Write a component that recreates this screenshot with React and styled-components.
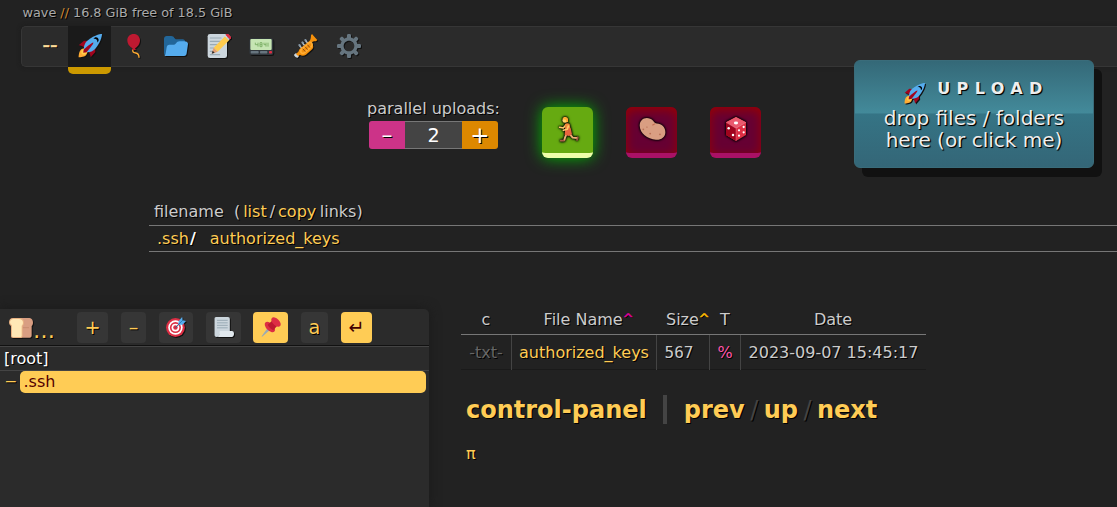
import React from 'react';
import styled, { createGlobalStyle, css } from 'styled-components';

const Global = createGlobalStyle`
  * { box-sizing: border-box; }
  body {
    margin: 0;
    background: #222;
    color: #ccc;
    font: 16px/1.2 "DejaVu Sans", sans-serif;
    text-shadow: 1px 1px 0 #000;
    overflow: hidden;
  }
`;

const Page = styled.div`
  position: relative;
  width: 1117px;
  height: 507px;
  overflow: hidden;
  display: flex;
  flex-direction: column;
`;

const Info = styled.div`
  flex: none;
  height: 26px;
  line-height: 26px;
  padding-left: 22.5px;
  font-size: 12.8px;
  color: #aaa;
  span { color: #c83; }
`;

const Toolbar = styled.nav`
  flex: none;
  display: flex;
  height: 41px;
  margin-left: 21px;
  background: #2b2b2b;
  border: 1px solid #363636;
  border-right: 0;
  border-radius: 5px 0 0 5px;
  box-shadow: 0 0 4px #1c1c1c;
`;

const Tab = styled.a`
  flex: none;
  display: flex;
  align-items: center;
  justify-content: center;
  width: ${p => p.$w || 43.2}px;
  height: 39px;
  padding-bottom: 1px;
  color: #fc5;
  ${p => p.$dashes && css`
    padding-left: 10px;
    font-size: 21px;
    color: #fd9;
    -webkit-text-stroke: 0.4px #fd9;
  `}
  ${p => p.$on && css`
    height: 48px;
    margin-top: -1px;
    background: #1a1a1a;
    border-bottom: 7px solid #c90;
    border-radius: 0 0 5px 5px;
  `}
`;

const Emoji = styled.svg`
  display: block;
  flex: none;
  width: ${p => p.$s || 24}px;
  height: ${p => p.$s || 24}px;
  overflow: visible;
  filter: ${p => p.$glow
    ? 'drop-shadow(0 0 1px #000) drop-shadow(0 0 1px #000)'
    : p.$flat ? 'none' : 'drop-shadow(1px 1px 0 #111)'};
`;

const Config = styled.section`
  flex: none;
  display: flex;
  height: 132px;
  padding: 31px 0 0 365px;
`;

const Parallel = styled.div`
  width: 137px;
  margin-right: 40px;
  text-align: center;
  line-height: 21px;
  white-space: nowrap;
`;

const Stepper = styled.div`
  display: flex;
  width: 129px;
  height: 28px;
  margin: 2px 0 0 4px;
  font-size: 19.2px;
  line-height: 28px;
  color: #fff;
`;

const StepButton = styled.span`
  width: 36px;
  font-size: ${p => p.$fs || 20}px;
  background: ${p => p.$bg};
  border-radius: ${p => p.$r};
`;

const StepValue = styled.span`
  flex: 1;
  line-height: 27px;
  background: #444;
  border: solid #777;
  border-width: 1px 0;
  text-shadow: none;
`;

const Toggle = styled.div`
  width: 51px;
  height: 51px;
  margin: 9px 33px 0 0;
  padding-top: 10px;
  display: flex;
  justify-content: center;
  align-items: flex-start;
  border-radius: 6px;
  background: ${p => (p.$on ? '#6a1' : '#603')};
  border-bottom: 5px solid ${p => (p.$on ? '#efa' : '#a16')};
  box-shadow: ${p => (p.$on ? '0 0 16px #0b0' : 'inset 0 3px 11px #900')};
`;

const Upload = styled.div`
  position: absolute;
  left: 854px;
  top: 60px;
  width: 240px;
  height: 108px;
  padding-top: 17px;
  border-radius: 6px;
  border: 1px solid #3a6c7a;
  background: linear-gradient(#346877 0%, #438a9a 49%, #357485 50%, #346677 100%);
  background-origin: border-box;
  box-shadow: 8px 9px 0 #111;
  color: #eee;
  text-align: center;
  font-size: 20px;
  line-height: 22px;
  text-shadow: 1px 1px 1px #000, 1px 1px 0 #122;
`;

const UploadTitle = styled.div`
  display: flex;
  justify-content: center;
  gap: 12px;
  height: 29px;
  line-height: 22px;
  font-size: 16px;
  font-weight: bold;
  letter-spacing: 6.4px;
  padding-left: 5px;
  svg { margin-top: 5px; }
`;

const Files = styled.section`
  flex: none;
  margin: 0 0 57px 149px;
`;

const FileLine = styled.div`
  height: ${p => (p.$head ? 27 : 26)}px;
  line-height: 25px;
  padding-left: ${p => (p.$head ? 5 : 8)}px;
  border-bottom: 1px solid #777;
  white-space: pre;
  a { color: #fc5; }
  b { color: #fff; margin-left: 1px; }
`;

const Gap = styled.span`
  display: inline-block;
  width: ${p => p.$w}px;
`;

const Bottom = styled.div`
  flex: 1;
  display: flex;
`;

const Tree = styled.aside`
  width: 429px;
  background: #2b2b2b;
  border-radius: 0 5px 0 0;
  box-shadow: 0 0 12px #1a1a1a;
`;

const TreeHead = styled.div`
  display: flex;
  height: 37px;
  padding-top: 3px;
  border-bottom: 1px solid #111;
`;

const Crumb = styled.div`
  display: flex;
  width: 77px;
  padding: 4px 0 0 9px;
  color: #fc5;
  font-size: 22px;
  line-height: 29px;
`;

const TreeButton = styled.a`
  display: flex;
  align-items: center;
  justify-content: center;
  width: ${p => p.$w}px;
  height: 31px;
  margin-right: ${p => p.$mr || 0}px;
  padding-bottom: 1px;
  border-radius: 4px;
  font-size: 19.2px;
  line-height: 31px;
  color: ${p => (p.$on ? '#400' : '#fc5')};
  background: ${p => (p.$on ? '#fc5' : '#363636')};
  ${p => p.$on && css`text-shadow: none;`}
`;

const Root = styled.div`
  height: 25px;
  line-height: 23px;
  padding-left: 4px;
  color: #fff;
  border-top: 1px solid #444;
  border-bottom: 1px solid #444;
`;

const Branch = styled.div`
  display: flex;
  line-height: 21px;
  color: #fc5;
`;

const Collapse = styled.span`
  width: 20px;
  padding-left: 6px;
  line-height: 19px;
  font-family: "DejaVu Sans Mono", monospace;
`;

const Leaf = styled.a`
  width: 406px;
  height: 22px;
  padding-left: 3.5px;
  border-radius: 5px;
  background: #fc5;
  color: #500;
  text-shadow: none;
`;

const Main = styled.main`
  padding-left: 32px;
`;

const columns = '50px 145px 53px 31px 186px';

const HeadRow = styled.div`
  display: grid;
  grid-template-columns: ${columns};
  height: 26px;
  line-height: 21px;
  border-bottom: 1px solid #777;
  text-align: center;
  white-space: nowrap;
`;

const DataRow = styled(HeadRow)`
  height: 35px;
  line-height: 35px;
  border-bottom: 1px solid #1a1a1a;
`;

const Cell = styled.span`
  color: ${p => p.$c || '#ccc'};
  padding-left: ${p => p.$pl || 0}px;
  ${p => p.$line && css`border-left: 1px solid #444;`}
  ${p => p.$mono && css`font-family: "DejaVu Sans Mono", monospace; padding-right: 8px;`}
`;

const Sort = styled.sup`
  color: ${p => p.$c};
  font-size: 12.8px;
  line-height: 0;
  vertical-align: 2px;
  -webkit-text-stroke: 0.5px ${p => p.$c};
`;

const Nav = styled.div`
  display: flex;
  align-items: center;
  height: 30px;
  margin: 25px 0 0 5px;
  font-size: 24px;
  font-weight: bold;
  color: #fc5;
`;

const Divider = styled.i`
  width: 4px;
  height: 29px;
  margin: -1px 17px 0 16px;
  background: #444;
`;

const Slash = styled.span`
  width: 19px;
  text-align: center;
  color: #444;
  font-weight: normal;
`;

const Pi = styled.div`
  margin: 19px 0 0 5px;
  color: #fc5;
`;

const art = {
  rocket: <>
    <path fill="#A0041E" d="M1 17l8-7 16 1 1 16-7 8s.001-5.999-6-12-12-6-12-6z" />
    <path fill="#FFAC33" d="M.973 35s-.036-7.979 2.985-11S15 21.187 15 21.187 14.999 29 11.999 32c-3 3-11.026 3-11.026 3z" />
    <circle fill="#FFCC4D" cx="9" cy="27" r="4" />
    <path fill="#55ACEE" d="M35.999 0s-10 0-22 10c-6 5-6 14-4 16s11 2 16-4c10-12 10-22 10-22z" />
    <path d="M26.999 5c-1.623 0-3.013.971-3.641 2.36.502-.227 1.055-.36 1.641-.36 2.209 0 4 1.791 4 4 0 .586-.133 1.139-.359 1.64 1.389-.627 2.359-2.017 2.359-3.64 0-2.209-1.791-4-4-4z" />
    <path fill="#A0041E" d="M8 28s0-4 1-5 13.001-10.999 14-10-9.001 13-10.001 14S8 28 8 28z" />
  </>,
  balloon: <>
    <path fill="none" stroke="#FFAC33" strokeWidth="2" strokeLinecap="round" d="M18 23c-1.500 4 1 5 4 5.500s5 3 5 6.500" />
    <path fill="#BE1931" d="M28.500 9.500c0 5.500-3.500 10-7.500 12l1.500 2.500h-6l1-2.500c-4.500-2-8-6.500-8-12C9.500 4 13.500 0 19 0s9.500 4 9.500 9.500z" />
  </>,
  folder: <>
    <path fill="#269" d="M0 29c0 2.200 1.800 4 4 4h24c2.200 0 4-1.800 4-4V12c0-2.200-1.800-4-4-4h-9c-3.600 0-3-5-8.400-5H4C1.800 3 0 4.800 0 7v22z" />
    <path fill="#55ACEE" d="M30 11h-6.600C18 11 18.600 16 15 16H8c-2.200 0-4 1.800-4 4L2.500 29c-.3 2-.8 3-1.700 3.500C1.500 33 3 33 4 33h26c2.200 0 4-1.800 4-4l2-14c0-2.200-1.800-4-6-4z" />
  </>,
  memo: <>
    <rect fill="#CCD6DD" x="1" y="0" width="29" height="36" rx="3.500" />
    <path stroke="#99AAB5" strokeWidth="1.800" strokeLinecap="round" d="M5 6h16M5 11h16M5 16h13M5 21h9M5 26h8M5 31h14" />
    <path fill="#FFCC4D" d="M10 20.500L27.500 3l6 6L16 26.500z" />
    <path fill="#F4ABBA" d="M29 1.500l2-1.500 5 5-2 2.500z" />
    <path fill="#DD2E44" d="M29 0h3l4 4v3l-2 1-6-6z" />
    <path fill="#CCD6DD" d="M26.500 3.500l1.500-1.500 6 6-1.500 1.500z" />
    <path fill="#E39F71" d="M10 20.500l6 6-8 3-1-1z" />
    <path fill="#292F33" d="M8.500 25l3 3-4.500 1.800z" />
  </>,
  pager: <>
    <rect fill="#31373D" x="-1" y="6.500" width="36" height="25" rx="3.500" />
    <rect fill="#C6E5B3" x=".5" y="7.500" width="32" height="16.500" rx="1.500" />
    <path fill="none" stroke="#7DAF66" strokeWidth="1.400" d="M8 13v3h4m0-3v6m3-6h3v6h-3zm0 3h3m3-3v3h3m0-3v6m3-6v6" />
    <rect fill="#67757F" x="1" y="25.500" width="12" height="3.800" rx="1" />
    <rect fill="#67757F" x="15" y="25.500" width="11" height="3.800" rx="1" />
    <rect fill="#DD2E44" x="28.500" y="25.500" width="4.500" height="3.800" rx="1" />
  </>,
  trumpet: <>
    <path fill="#CCD6DD" d="M0 31l3-2.500 4.500 4.500-2 2.500c-2 .5-5.500-2.500-5.500-4.500z" />
    <path stroke="#BCC6CD" strokeWidth="2.200" d="M8 17l5 6M12.500 13l5 6M17 9.500l5 6" />
    <path stroke="#8899A6" strokeWidth="3" strokeLinecap="round" d="M8 16.500l1 1M12.500 12.500l1 1M17 9l1 1" />
    <path fill="#F4900C" d="M3 30L23 11c2-2 2.500-6 2.500-9L27 0l8 9-2 2c-4 0-5 .5-7 2.500L6.500 33.500z" />
    <path fill="#F4900C" d="M9 22l14-11 5 5c2 4 0 6-2 8l-8 7c-3 2-7 2-9 0s-3-6 0-9z" />
    <path fill="none" stroke="#FFAC33" strokeWidth="2.600" d="M11 23c-3 3 1 8 5 5l10-9c3-3 0-8-3-6z" />
    <path fill="none" stroke="#7c3f10" strokeWidth="1.300" strokeLinecap="round" d="M13.500 22.500l3 3.500M17 19.500l3 3.500M20.500 16.500l3 3.500" />
  </>,
  gear: <path fill="#66757F" d="M34 15h-3.362c-.324-1.369-.864-2.651-1.582-3.814l2.379-2.379c.781-.781.781-2.048 0-2.829l-1.414-1.414c-.781-.781-2.047-.781-2.828 0l-2.379 2.379C23.65 6.225 22.369 5.686 21 5.362V2c0-1.104-.896-2-2-2h-2c-1.104 0-2 .896-2 2v3.362c-1.369.324-2.651.864-3.814 1.582L8.808 4.565c-.781-.781-2.048-.781-2.828 0L4.565 5.979c-.781.781-.781 2.048-.001 2.829l2.379 2.379C6.225 12.35 5.686 13.632 5.362 15H2c-1.104 0-2 .896-2 2v2c0 1.104.896 2 2 2h3.362c.324 1.368.864 2.65 1.582 3.813l-2.379 2.379c-.78.78-.78 2.048.001 2.829l1.414 1.414c.78.78 2.047.78 2.828 0l2.379-2.379c1.163.719 2.445 1.258 3.814 1.582V34c0 1.104.896 2 2 2h2c1.104 0 2-.896 2-2v-3.362c1.368-.324 2.65-.864 3.813-1.582l2.379 2.379c.781.781 2.047.781 2.828 0l1.414-1.414c.781-.781.781-2.048 0-2.829l-2.379-2.379c.719-1.163 1.258-2.445 1.582-3.814H34c1.104 0 2-.896 2-2v-2C36 15.896 35.104 15 34 15zM18 26c-4.418 0-8-3.582-8-8s3.582-8 8-8 8 3.582 8 8-3.582 8-8 8z" />,
  runner: <>
    <path fill="none" stroke="#FFCB6B" strokeWidth="2.400" strokeLinecap="round" strokeLinejoin="round" d="M14.500 12.500l-3.500 4-5.500-1" />
    <path fill="none" stroke="#EFB074" strokeWidth="2.800" strokeLinecap="round" strokeLinejoin="round" d="M15.500 26l-2 5-1 3.500M21 26l4 5 7 .5" />
    <path fill="none" stroke="#A85C46" strokeWidth="2.400" strokeLinecap="round" d="M12 35.500H7M32.500 30.500l-1 4" />
    <path fill="#F28A3C" d="M13.500 10.500c2-1.500 5.500-1.500 7 .5l1.500 9h-8z" />
    <path fill="#E8653F" d="M14 17h8l2 9-4.500 2.500-6.500-1.500z" />
    <path fill="none" stroke="#FFCB6B" strokeWidth="2.400" strokeLinecap="round" strokeLinejoin="round" d="M18.500 13.500l-1.500 5-6 1.500" />
    <circle fill="#FFD368" cx="13.500" cy="5" r="3.800" />
    <path fill="#FFAC33" d="M10 3c0-4 7-4 8 0v5l-2.500-1-1-3z" />
  </>,
  potato: <>
    <path fill="#D99E82" d="M1 11C1.500 4 8-.5 15.500 2.500c5 2 5 6 9 6.500 7 .5 12 5 12 12 0 7-6 11-13 10.500C11.500 30.500.500 22 1 11z" />
    <path fill="none" stroke="#C1694F" strokeWidth="1.500" strokeLinecap="round" d="M19 11l3-1.500" />
    <g fill="#B86F55"><circle cx="6" cy="17" r="1.200" /><circle cx="11" cy="14" r="1" /><circle cx="15.500" cy="23" r="1.300" /><circle cx="29" cy="24" r="1.200" /></g>
  </>,
  die: <>
    <path fill="#DD2E44" d="M18 0l15 8v19l-15 9-15-9V8z" />
    <path fill="#EA596E" d="M18 0l15 8-15 9L3 8z" />
    <path fill="#A0041E" d="M3 8l15 9v19L3 27z" />
    <path fill="#F4ABBA" d="M3 7.500l15 8.800 15-8.800v1l-14.500 8.700V36h-1V17.200L3 8.500z" opacity=".45" />
    <g fill="#fff"><ellipse cx="18" cy="9" rx="3.200" ry="2.200" /><circle cx="7" cy="17" r="1.900" /><circle cx="13.500" cy="27" r="1.900" /><circle cx="29.500" cy="15" r="1.700" /><circle cx="22.500" cy="20" r="1.700" /><circle cx="29.500" cy="23" r="1.700" /><circle cx="22.500" cy="28" r="1.700" /></g>
  </>,
  bread: <>
    <path fill="#D99E82" d="M13 3h16c5 0 7 3 7 7 0 3-1.500 4.500-2 5v14c0 2-1 3.500-3 3.500H13z" />
    <path fill="#C68A6C" d="M20 17h10v1.200H20z" />
    <path fill="#E9B384" d="M6 3h9c5 0 7.500 3 7.500 7 0 3-1.500 4.500-2 5v14.500c0 2-1.500 3.500-3.500 3.500H6c-2 0-3-1-3-3V15c-1-1-3-2-3-5.500C0 6 2 3 6 3z" />
    <path fill="#FFE8B6" d="M6.500 4.500h8c4 0 6.500 2 6.500 5.500 0 2.500-1.500 4-2 4.500v15c0 1.500-1 2-2 2H6.500c-1.500 0-2-1-2-2V14C4 13.500 1.500 12 1.500 9.500c0-3 2-5 5-5z" />
  </>,
  dart: <>
    <circle fill="#DD2E44" cx="17" cy="19" r="17" />
    <circle fill="#fff" cx="17" cy="19" r="13" />
    <circle fill="#DD2E44" cx="17" cy="19" r="10" />
    <circle fill="#fff" cx="17" cy="19" r="7" />
    <circle fill="#DD2E44" cx="17" cy="19" r="4" />
    <path stroke="#226699" strokeWidth="1.800" d="M17 19L29 8" />
    <path fill="#55ACEE" d="M22 12l1-5 6-7 1 6 6 1-6 7-6 0z" />
    <path stroke="#269" strokeWidth="1.200" d="M23 13l8-8" />
  </>,
  scroll: <>
    <path fill="#CCD6DD" d="M4 0h21c2.500 0 3.500 1.500 3.500 4v25H11c0 3-2 7-6 7s-4-3-4-5V4c0-2.500.5-4 3-4z" />
    <path stroke="#99AAB5" strokeWidth="1.800" strokeLinecap="round" d="M6 6h18M6 10.500h18M6 15h18M6 19.500h18" />
    <path fill="#E1E8ED" d="M11 25h21c3 0 4 2 4 5s-1.500 6-4 6H5c4 0 5-4 5-7 0-2 0-4 1-4z" />
  </>,
  pin: <>
    <path fill="#99AAB5" d="M12 20L1 34.800 2 35.500l14-12z" />
    <ellipse fill="#DD2E44" cx="16" cy="18" rx="11.500" ry="6.500" transform="rotate(45 16 18)" />
    <path fill="#BE1931" d="M12 14l10-9 9 9-9 10c-4-2-8-6-10-10z" />
    <ellipse fill="#DD2E44" cx="27" cy="9" rx="10.500" ry="6" transform="rotate(45 27 9)" />
  </>,
};

const Icon = ({ name, ...rest }) => (
  <Emoji viewBox="0 0 36 36" aria-hidden="true" {...rest}>{art[name]}</Emoji>
);

export default function App() {
  return (
    <Page>
      <Global />
      <Info>wave <span>//</span> 16.8 GiB free of 18.5 GiB</Info>
      <Toolbar>
        <Tab $w={46} $dashes>--</Tab>
        <Tab $on><Icon name="rocket" /></Tab>
        {['balloon', 'folder', 'memo', 'pager', 'trumpet', 'gear'].map(n => (
          <Tab key={n}><Icon name={n} /></Tab>
        ))}
      </Toolbar>

      <Config>
        <Parallel>
          parallel uploads:
          <Stepper>
            <StepButton $bg="#c38" $r="3px 0 0 3px" $fs={22}>–</StepButton>
            <StepValue>2</StepValue>
            <StepButton $bg="#d80" $r="0 3px 3px 0" $fs={23}>+</StepButton>
          </Stepper>
        </Parallel>
        <Toggle $on><Icon name="runner" $glow /></Toggle>
        <Toggle><Icon name="potato" $s={26} $glow /></Toggle>
        <Toggle><Icon name="die" $glow /></Toggle>
      </Config>

      <Files>
        <FileLine $head>filename  (<Gap $w={3} /><a>list</a><Gap $w={3} />/<Gap $w={3} /><a>copy</a><Gap $w={3.5} />links)</FileLine>
        <FileLine><a>.ssh</a><b>/</b><Gap $w={14} /><a>authorized_keys</a></FileLine>
      </Files>

      <Bottom>
        <Tree>
          <TreeHead>
            <Crumb><Icon name="bread" />…</Crumb>
            <TreeButton $w={31} $mr={13}>+</TreeButton>
            <TreeButton $w={25} $mr={13}>–</TreeButton>
            <TreeButton $w={34} $mr={13}><Icon name="dart" $s={20} /></TreeButton>
            <TreeButton $w={35} $mr={12}><Icon name="scroll" $s={20} /></TreeButton>
            <TreeButton $w={35} $mr={13} $on><Icon name="pin" $s={20} $flat /></TreeButton>
            <TreeButton $w={27} $mr={13}>a</TreeButton>
            <TreeButton $w={31} $on>↵</TreeButton>
          </TreeHead>
          <Root>[root]</Root>
          <Branch><Collapse>–</Collapse><Leaf>.ssh</Leaf></Branch>
        </Tree>

        <Main>
          <HeadRow>
            <Cell>c</Cell>
            <Cell $pl={10}>File Name<Sort $c="#d09">^</Sort></Cell>
            <Cell $pl={10}>Size<Sort $c="#fb0">^</Sort></Cell>
            <Cell $pl={1}>T</Cell>
            <Cell>Date</Cell>
          </HeadRow>
          <DataRow>
            <Cell $c="#666">-txt-</Cell>
            <Cell $c="#fc5" $line>authorized_keys</Cell>
            <Cell $line $mono>567</Cell>
            <Cell $c="#f5a" $line>%</Cell>
            <Cell $line>2023-09-07 15:45:17</Cell>
          </DataRow>
          <Nav>
            <a>control-panel</a><Divider /><a>prev</a><Slash>/</Slash><a>up</a><Slash>/</Slash><a>next</a>
          </Nav>
          <Pi>π</Pi>
        </Main>
      </Bottom>

      <Upload>
        <UploadTitle><Icon name="rocket" $s={21} />UPLOAD</UploadTitle>
        drop files / folders<br />here (or click me)
      </Upload>
    </Page>
  );
}
